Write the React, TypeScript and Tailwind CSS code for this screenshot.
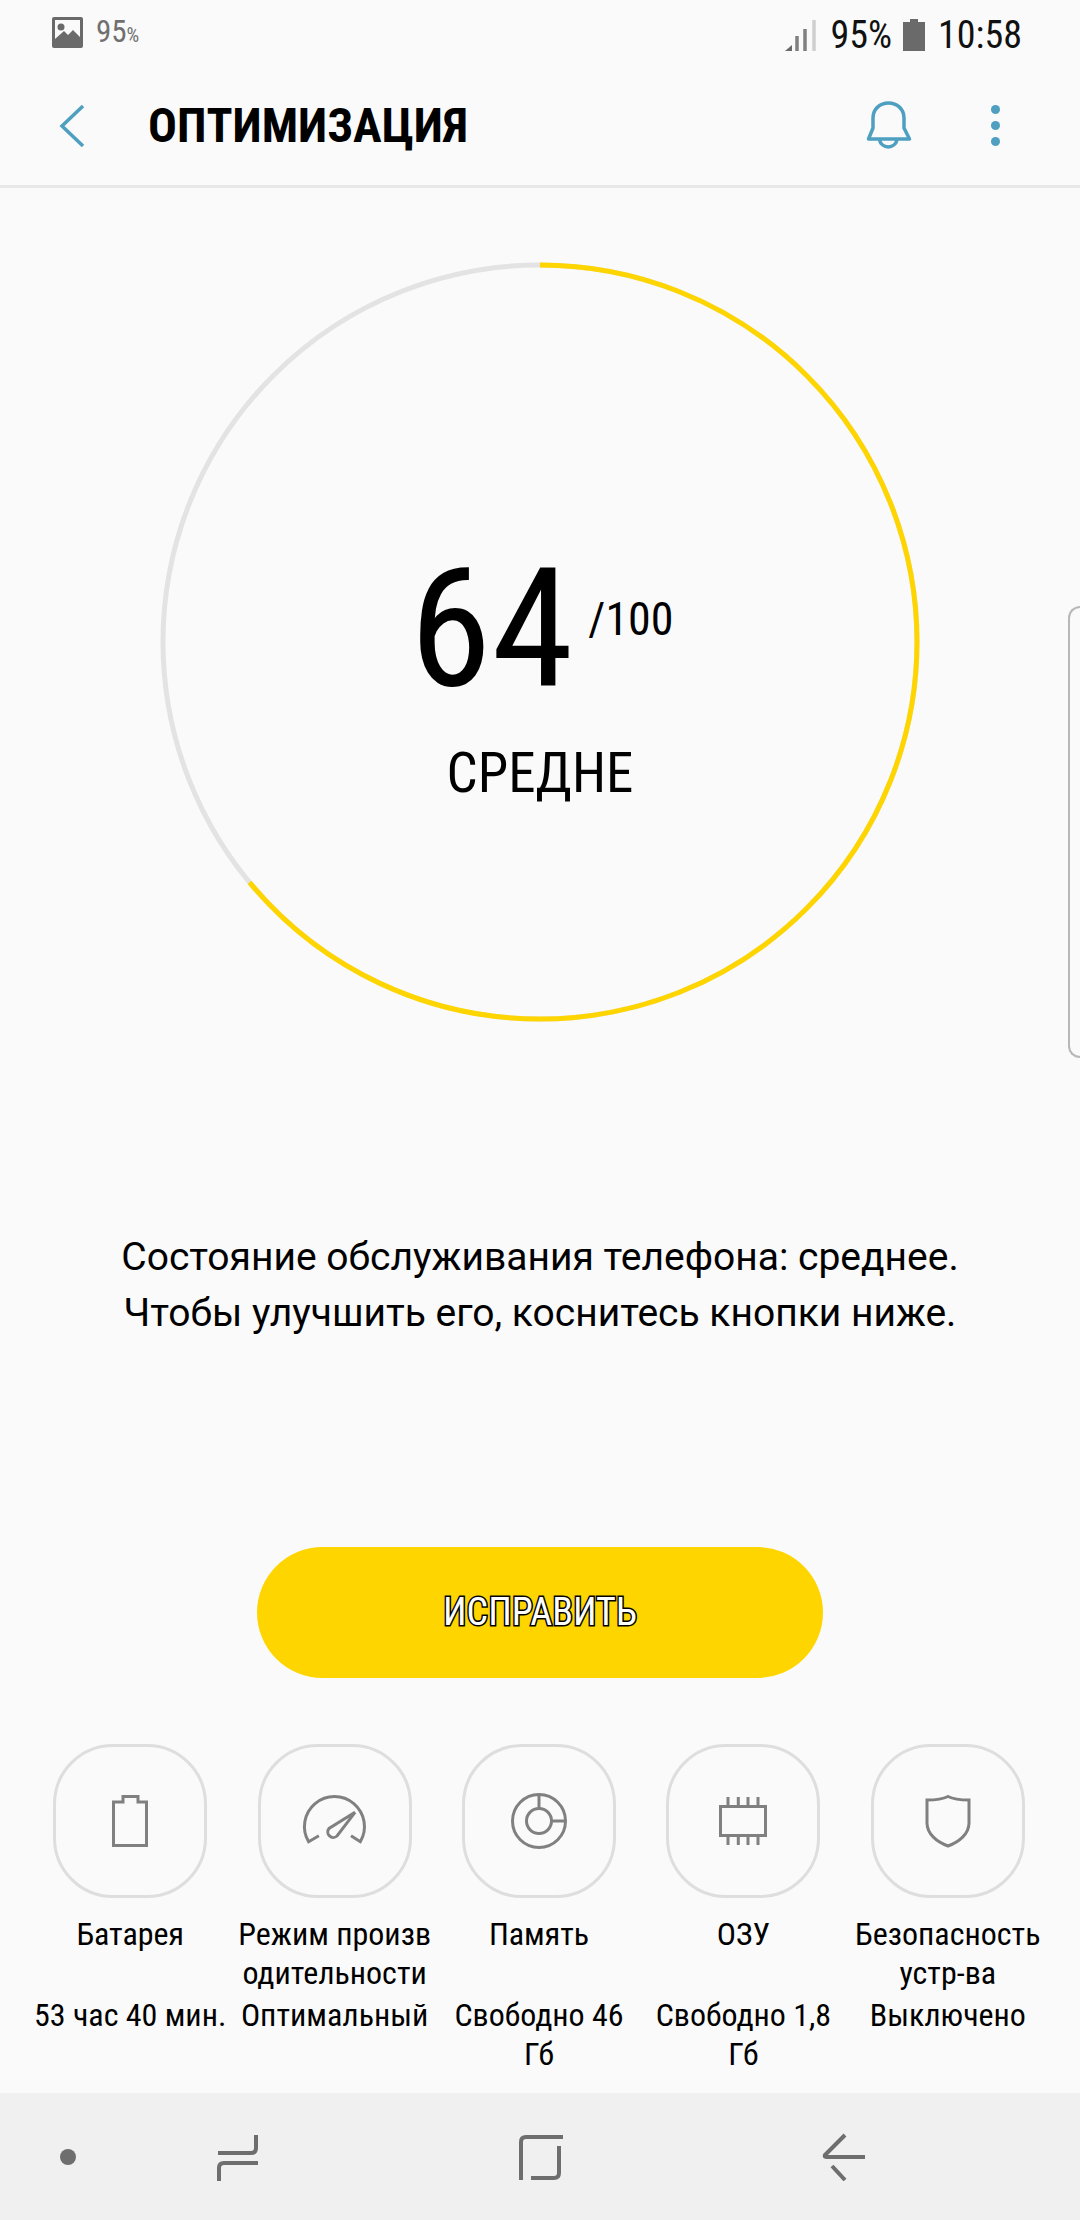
import React from 'react';

const condensed = 'font-["Roboto","Liberation_Sans",sans-serif] [font-stretch:75%]';

const tiles = [
  { icon: 'battery', title: ['Батарея'], value: ['53 час 40 мин.'] },
  { icon: 'gauge', title: ['Режим произв', 'одительности'], value: ['Оптимальный'] },
  { icon: 'storage', title: ['Память'], value: ['Свободно 46', 'Гб'] },
  { icon: 'chip', title: ['ОЗУ'], value: ['Свободно 1,8', 'Гб'] },
  { icon: 'shield', title: ['Безопасность', 'устр-ва'], value: ['Выключено'] },
];

const TileIcon: React.FC<{ name: string }> = ({ name }) => {
  const common = { width: 154, height: 154, viewBox: '0 0 154 154', fill: 'none', stroke: '#808080', strokeWidth: 3 };
  if (name === 'battery') {
    return (
      <svg {...common}>
        <path d="M60.500 58V101.500H93.500V58H85V52.500H70V58Z" />
      </svg>
    );
  }
  if (name === 'gauge') {
    return (
      <svg {...common}>
        <path d="M60.900 91.700L50.600 97.700A30 30 0 1 1 102.300 97.700L93 91.700" />
        <path d="M97 68.300L71 84.500A5.500 5.500 0 0 0 79 92Z" />
      </svg>
    );
  }
  if (name === 'storage') {
    return (
      <svg {...common}>
        <circle cx="77" cy="77" r="26.500" />
        <circle cx="77" cy="77" r="12.500" />
        <path d="M77 50.500V64.500M89.500 77H103.500" />
      </svg>
    );
  }
  if (name === 'chip') {
    return (
      <svg {...common}>
        <rect x="54.500" y="62.500" width="45" height="29" />
        <path d="M62 53V62M72.300 53V62M82 53V62M92 53V62M62 92V101M72.300 92V101M82 92V101M92 92V101" />
      </svg>
    );
  }
  return (
    <svg {...common}>
      <path d="M56 56C63 56 71 55.500 77 52.500C83 55.500 91 56 98 56V79C98 90 88 98 77 102C66 98 56 90 56 79Z" />
    </svg>
  );
};

export default function App() {
  return (
    <div className={`relative flex h-[2220px] w-[1080px] flex-col overflow-hidden bg-[#fafafa] text-black ${condensed}`}>
      {/* status bar */}
      <div className="flex h-[66px] items-start justify-between pl-[52px] pr-[58px] pt-[16px]">
        <div className="flex items-center gap-[13px]">
          <svg width="31" height="31" viewBox="0 0 31 31">
            <rect width="31" height="31" rx="2" fill="#6a6a6a" />
            <rect x="3" y="3" width="25" height="25" fill="#fafafa" />
            <circle cx="9" cy="10" r="3.500" fill="#6a6a6a" />
            <path d="M3 22L12 14L16 18L21 13L28 20V28H3Z" fill="#6a6a6a" />
          </svg>
          <div className="flex items-baseline text-[#707070]">
            <span className="text-[31px] leading-[32px]">95</span>
            <span className="text-[20px] leading-[16px]">%</span>
          </div>
        </div>
        <div className="flex items-center pt-[1px]">
          <svg width="31" height="32" viewBox="0 0 31 32" className="mr-[15px]">
            <path d="M0 32L7 26V32Z" fill="#6a6a6a" />
            <path d="M12 32V17M20 32V10" stroke="#808080" strokeWidth="3.500" />
            <path d="M29 32V1" stroke="#cfcfcf" strokeWidth="3.500" />
          </svg>
          <span className="text-[38px] leading-[36px] text-[#111111]">95%</span>
          <svg width="22" height="32" viewBox="0 0 22 32" className="ml-[11px]">
            <path d="M7 0H15V3H22V32H0V3H7Z" fill="#6a6a6a" />
          </svg>
          <span className="ml-[13px] text-[38px] leading-[36px] text-[#111111]">10:58</span>
        </div>
      </div>

      {/* header */}
      <header className="flex h-[122px] items-center border-b-[3px] border-[#e8e8e8]">
        <svg width="28" height="44" viewBox="0 0 28 44" className="ml-[58px]" fill="none" stroke="#4e9fc0" strokeWidth="3.500">
          <path d="M25 2L4 22L25 42" />
        </svg>
        <h1 className="ml-[62px] text-[48px] font-bold leading-[56px]">ОПТИМИЗАЦИЯ</h1>
        <svg width="46" height="50" viewBox="0 0 46 50" className="ml-auto" fill="none" stroke="#4e9fc0" strokeWidth="3.500" strokeLinejoin="round">
          <path d="M2.500 38L7 27V17C7 8 14 2 22.500 2C31 2 38 8 38 17V27L43.500 38Z" />
          <path d="M13.500 39A9 9 0 0 0 31 39" />
        </svg>
        <div className="ml-[79px] mr-[80px] flex flex-col gap-[7px]">
          <span className="h-[9px] w-[9px] rounded-full bg-[#4e9fc0]" />
          <span className="h-[9px] w-[9px] rounded-full bg-[#4e9fc0]" />
          <span className="h-[9px] w-[9px] rounded-full bg-[#4e9fc0]" />
        </div>
      </header>

      {/* score ring */}
      <section className="relative mx-auto mt-[74px] h-[760px] w-[760px]">
        <svg width="760" height="760" viewBox="0 0 760 760" fill="none" strokeWidth="5">
          <circle cx="380" cy="380" r="377" stroke="#e3e3e3" />
          <circle
            cx="380"
            cy="380"
            r="377"
            stroke="#ffd500"
            pathLength={100}
            strokeDasharray="64 100"
            transform="rotate(-90 380 380)"
          />
        </svg>
        <div className="absolute inset-0 flex flex-col items-center">
          <div className="mt-[282px] flex items-start pl-[3px]">
            <span className="text-[166px] leading-[170px]">64</span>
            <span className="ml-[15px] mt-[47px] text-[46px] leading-[56px]">/100</span>
          </div>
          <span className="mt-[26px] text-[55px] leading-[66px]">СРЕДНЕ</span>
        </div>
      </section>

      <p className="mt-[207px] text-center text-[39px] leading-[56px] [font-stretch:100%]">
        Состояние обслуживания телефона: среднее.
        <br />
        Чтобы улучшить его, коснитесь кнопки ниже.
      </p>

      <button className="mx-auto mt-[206px] h-[131px] w-[566px] rounded-full bg-[#ffd500] text-[38px] text-white [-webkit-text-stroke:3px_black] [paint-order:stroke_fill]">
        ИСПРАВИТЬ
      </button>

      {/* feature tiles */}
      <div className="mt-[66px] grid grid-cols-5 pl-[28px] pr-[30px]">
        {tiles.map((tile) => (
          <div key={tile.icon} className="flex flex-col items-center text-center text-[32px] leading-[39px]">
            <div className="h-[154px] w-[154px] rounded-[60px] border-[3px] border-[#dedede]">
              <div className="-m-[3px]">
                <TileIcon name={tile.icon} />
              </div>
            </div>
            <div className="mt-[17px] h-[78px] whitespace-nowrap">
              {tile.title.map((line) => (
                <div key={line}>{line}</div>
              ))}
            </div>
            <div className="mt-[3px] whitespace-nowrap">
              {tile.value.map((line) => (
                <div key={line}>{line}</div>
              ))}
            </div>
          </div>
        ))}
      </div>

      {/* navigation bar */}
      <nav className="mt-auto flex h-[127px] items-center bg-[#f0f0f0]">
        <span className="ml-[60px] h-[16px] w-[16px] rounded-full bg-[#6e6e6e]" />
        <svg width="44" height="48" viewBox="0 0 44 48" className="ml-[140px]" fill="none" stroke="#6e6e6e" strokeWidth="4">
          <path d="M2 20H35Q40 20 40 15V2M42 30H8Q3 30 3 35V48" />
        </svg>
        <svg width="46" height="46" viewBox="0 0 46 46" className="ml-[258px]" fill="none" stroke="#6e6e6e" strokeWidth="4">
          <path d="M3 46V8Q3 3 8 3H45M41 12V39Q41 44 36 44H13" />
        </svg>
        <svg width="46" height="48" viewBox="0 0 46 48" className="ml-[257px]" fill="none" stroke="#6e6e6e" strokeWidth="4">
          <path d="M24 2L4 22Q3 24 6 24H44M11 33L24 47" />
        </svg>
      </nav>

      {/* edge panel handle */}
      <div className="absolute right-0 top-[606px] h-[452px] w-[12px] rounded-l-[14px] border-y-2 border-l-2 border-[#b8b8b8]" />
    </div>
  );
}
